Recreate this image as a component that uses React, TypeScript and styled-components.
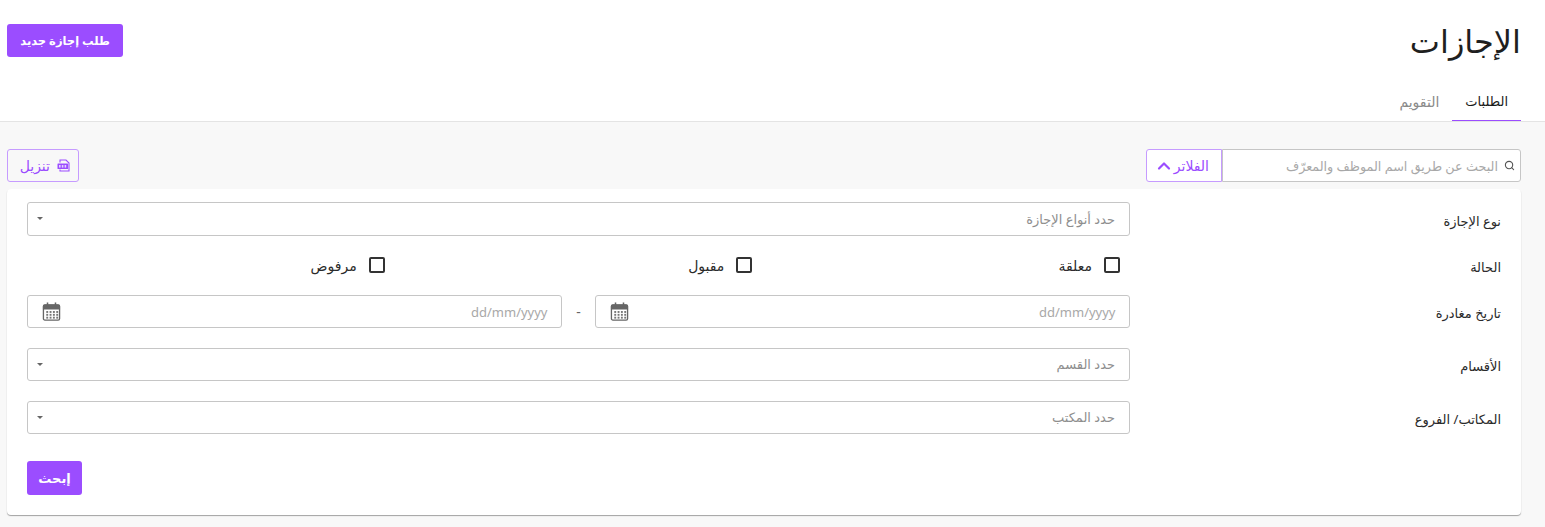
import styled, { createGlobalStyle } from "styled-components";
import { ChevronUp, Search } from "lucide-react";

const FONT = `"Noto Sans", "DejaVu Sans", "Liberation Sans", sans-serif`;

const GlobalStyle = createGlobalStyle`
  html, body {
    margin: 0;
    padding: 0;
    background: #f8f8f8;
    font-family: ${FONT};
  }
  * {
    box-sizing: border-box;
  }
`;

function CalendarIcon() {
  return (
    <svg width="19" height="19" viewBox="0 0 20 20" fill="none">
      <rect x="1.5" y="3" width="17" height="16" rx="1.5" fill="#fff" stroke="#666" strokeWidth="1.4" />
      <path d="M1 4.5a2 2 0 0 1 2-2h14a2 2 0 0 1 2 2V8H1z" fill="#666" />
      <rect x="5" y="0.5" width="1.6" height="4.5" fill="#666" />
      <rect x="13.4" y="0.5" width="1.6" height="4.5" fill="#666" />
      {[9.5, 12.5, 15.5].map((y) =>
        [4.5, 8, 11.5, 15].map((x) => (
          <rect key={`${x}-${y}`} x={x} y={y} width="2" height="2" fill="#777" />
        ))
      )}
    </svg>
  );
}

function XlsIcon() {
  return (
    <svg width="13" height="13" viewBox="0 0 13 13" fill="none">
      <path d="M3 3.5V1h6l3 3v8H3V10.5" stroke="#9b4dff" strokeWidth="1.1" />
      <rect x="0.5" y="4.5" width="10.5" height="5.5" rx="0.5" fill="#9b4dff" />
      <rect x="2" y="6" width="1.6" height="2.6" fill="#e6d5ff" />
      <rect x="4.8" y="6" width="1.6" height="2.6" fill="#e6d5ff" />
      <rect x="7.6" y="6" width="1.6" height="2.6" fill="#e6d5ff" />
    </svg>
  );
}

function SelectField({ placeholder }: { placeholder: string }) {
  return (
    <SelectBox>
      <Placeholder>{placeholder}</Placeholder>
      <CaretMark />
    </SelectBox>
  );
}

function DateField() {
  return (
    <DateBox>
      <DateInput placeholder="dd/mm/yyyy" readOnly />
      <CalendarIcon />
    </DateBox>
  );
}

function StatusCheck({ label }: { label: string }) {
  return (
    <CheckLabel>
      <CheckBox />
      <span>{label}</span>
    </CheckLabel>
  );
}

export default function App() {
  return (
    <Page dir="rtl">
      <GlobalStyle />
      <TopPanel>
        <TitleRow>
          <Title>الإجازات</Title>
          <PrimaryButton>طلب إجازة جديد</PrimaryButton>
        </TitleRow>
        <Tabs>
          <Tab $active>الطلبات</Tab>
          <Tab>التقويم</Tab>
        </Tabs>
      </TopPanel>

      <Content>
        <Toolbar>
          <SearchGroup>
            <SearchBox>
              <Search size={11} color="#555" strokeWidth={2.4} />
              <SearchInput placeholder="البحث عن طريق اسم الموظف والمعرّف" readOnly />
            </SearchBox>
            <FilterButton>
              الفلاتر
              <ChevronUp size={20} strokeWidth={2.6} />
            </FilterButton>
          </SearchGroup>
          <DownloadButton>
            <XlsIcon />
            تنزيل
          </DownloadButton>
        </Toolbar>

        <Card>
          <Row>
            <Label>نوع الإجازة</Label>
            <SelectField placeholder="حدد أنواع الإجازة" />
          </Row>
          <Row>
            <Label>الحالة</Label>
            <CheckGrid>
              <StatusCheck label="معلقة" />
              <StatusCheck label="مقبول" />
              <StatusCheck label="مرفوض" />
            </CheckGrid>
          </Row>
          <Row>
            <Label>تاريخ مغادرة</Label>
            <DateRange>
              <DateField />
              <Dash>-</Dash>
              <DateField />
            </DateRange>
          </Row>
          <Row>
            <Label>الأقسام</Label>
            <SelectField placeholder="حدد القسم" />
          </Row>
          <Row>
            <Label>المكاتب/ الفروع</Label>
            <SelectField placeholder="حدد المكتب" />
          </Row>
          <SubmitRow>
            <SubmitButton>إبحث</SubmitButton>
          </SubmitRow>
        </Card>
      </Content>
    </Page>
  );
}

const Page = styled.div`
  min-height: 527px;
  color: #212121;
  font-family: ${FONT};
`;

const TopPanel = styled.header`
  background: #fff;
  height: 122px;
  border-bottom: 1px solid #e4e4e4;
  padding: 24px 24px 0 7px;
  display: flex;
  flex-direction: column;
  justify-content: space-between;
`;

const TitleRow = styled.div`
  display: flex;
  justify-content: space-between;
  align-items: flex-start;
`;

const Title = styled.h1`
  margin: 0;
  font-size: 32px;
  line-height: 34px;
  font-weight: 400;
  color: #1f1f1f;
`;

const PrimaryButton = styled.button`
  height: 33px;
  width: 116px;
  padding: 0;
  border: none;
  border-radius: 3px;
  background: #9b4dff;
  color: #fff;
  font-family: inherit;
  font-size: 11.5px;
  font-weight: 700;
`;

const Tabs = styled.nav`
  display: flex;
  height: 39px;
  margin-bottom: -1px;
`;

const Tab = styled.div<{ $active?: boolean }>`
  padding: 0 13px;
  line-height: 37px;
  font-size: ${(p) => (p.$active ? "13px" : "14px")};
  color: ${(p) => (p.$active ? "#1a1a1a" : "#8a8a8a")};
  border-bottom: ${(p) => (p.$active ? "1px solid #9b4dff" : "none")};
  height: 38px;
  font-weight: ${(p) => (p.$active ? 500 : 400)};
`;

const Content = styled.main`
  padding: 27px 24px 12px 7px;
`;

const Toolbar = styled.div`
  display: flex;
  justify-content: space-between;
  margin-bottom: 7px;
`;

const SearchGroup = styled.div`
  display: flex;
  height: 33px;
`;

const SearchBox = styled.div`
  width: 299px;
  display: flex;
  align-items: center;
  gap: 4px;
  padding: 0 5px;
  background: #fff;
  border: 1px solid #c6c6c6;
  border-radius: 0 3px 3px 0;
`;

const SearchInput = styled.input`
  flex: 1;
  min-width: 0;
  border: none;
  outline: none;
  background: transparent;
  font-family: inherit;
  font-size: 12.75px;
  &::placeholder {
    color: #a8a8a8;
    opacity: 1;
  }
`;

const OutlineButton = styled.button`
  display: flex;
  align-items: center;
  height: 33px;
  background: #fff;
  color: #9b4dff;
  border: 1px solid #c69bff;
  font-family: inherit;
`;

const FilterButton = styled(OutlineButton)`
  width: 76px;
  padding: 0 12px 0 0;
  border-radius: 3px 0 0 3px;
  font-size: 14px;
  font-weight: 500;
`;

const DownloadButton = styled(OutlineButton)`
  width: 72px;
  padding: 0 8px 0 0;
  gap: 7px;
  border-radius: 3px;
  background: transparent;
  font-size: 14px;
`;

const Card = styled.section`
  background: #fff;
  border-radius: 4px;
  box-shadow: 0 1px 1px rgba(0, 0, 0, 0.35);
  padding: 13px 20px 20px;
  height: 326px;
`;

const Row = styled.div`
  display: grid;
  grid-template-columns: 371px 1fr;
  align-items: center;
  margin-bottom: 19.5px;
`;

const SubmitRow = styled.div`
  display: flex;
  justify-content: flex-end;
  margin-top: 26.7px;
`;

const Label = styled.label`
  font-size: 13px;
  line-height: 15.5px;
  padding-top: 5px;
  color: #2a2a2a;
`;

const SelectBox = styled.div`
  height: 33.6px;
  display: flex;
  align-items: center;
  justify-content: space-between;
  padding: 0 14px 0 9px;
  border: 1px solid #c6c6c6;
  border-radius: 3px;
  background: #fff;
`;

const Placeholder = styled.span`
  font-size: 13px;
  color: #8e8e8e;
`;

const CaretMark = styled.span`
  width: 0;
  height: 0;
  border-left: 3px solid transparent;
  border-right: 3px solid transparent;
  border-top: 3px solid #666;
`;

const CheckGrid = styled.div`
  display: grid;
  grid-template-columns: repeat(3, 1fr);
  height: 20.5px;
`;

const CheckLabel = styled.div`
  display: flex;
  align-items: center;
  gap: 12px;
  padding-right: 10px;
  font-size: 14px;
  color: #2a2a2a;
`;

const CheckBox = styled.span`
  width: 16px;
  height: 16px;
  border: 2px solid #333;
  border-radius: 2px;
`;

const DateRange = styled.div`
  display: grid;
  grid-template-columns: 1fr 33px 1fr;
  align-items: center;
`;

const Dash = styled.span`
  text-align: center;
  font-size: 14px;
  color: #666;
`;

const DateBox = styled.div`
  height: 33px;
  display: flex;
  align-items: center;
  padding: 0 13.5px;
  border: 1px solid #c6c6c6;
  border-radius: 3px;
  background: #fff;
`;

const DateInput = styled.input`
  flex: 1;
  min-width: 0;
  border: none;
  outline: none;
  padding: 0;
  background: transparent;
  font-family: inherit;
  font-size: 13px;
  &::placeholder {
    color: #a8a8a8;
    opacity: 1;
  }
`;

const SubmitButton = styled.button`
  width: 55px;
  height: 34px;
  padding: 0;
  border: none;
  border-radius: 3px;
  background: #9b4dff;
  color: #fff;
  font-family: inherit;
  font-size: 13px;
  font-weight: 700;
`;
